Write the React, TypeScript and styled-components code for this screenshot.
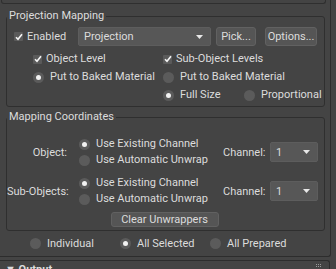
import React from 'react'
import styled, { createGlobalStyle } from 'styled-components'

const GlobalStyle = createGlobalStyle`
  html, body {
    margin: 0;
    padding: 0;
    background: #444444;
  }
  body {
    font-family: Roboto, "Liberation Sans", sans-serif;
    font-size: 11px;
    color: #dcdcdc;
  }
`

const Screen = styled.div`
  width: 336px;
  height: 269px;
  overflow: hidden;
  background: #444444;
`

const Rollout = styled.div`
  width: 330px;
  border-right: 1px solid #2d2d2d;
  border-bottom: 1px solid #2d2d2d;
  border-bottom-right-radius: 3px;
`

const PrevGroupEnd = styled.div`
  height: 3px;
  margin-left: 1px;
  width: 323px;
  border: 1px solid #2f2f2f;
  border-top: none;
  border-radius: 0 0 3px 3px;
`

const Group = styled.fieldset<{ $top: number }>`
  margin: ${p => p.$top}px 0 0 6px;
  padding: 0;
  min-width: 0;
  width: 317px;
  border: 1px solid #2f2f2f;
  border-radius: 3px;
  legend {
    margin-left: 0;
    padding: 0 2px;
    line-height: 14px;
    font-size: 11px;
  }
`

const GroupBody = styled.div<{ $pad: string }>`
  padding: ${p => p.$pad};
`

const TopRow = styled.div`
  display: flex;
  align-items: center;
  height: 19px;
  padding-left: 7px;
`

const EnabledCell = styled.div`
  width: 64px;
`

const Item = styled.label<{ $w?: number; $gap?: number }>`
  display: flex;
  align-items: center;
  gap: ${p => p.$gap ?? 4}px;
  width: ${p => (p.$w ? `${p.$w}px` : 'auto')};
  white-space: nowrap;
  line-height: 14px;
`

const Box = styled.span`
  width: 9px;
  height: 9px;
  background: #5a5a5a;
  border-radius: 1px;
  display: flex;
  align-items: center;
  justify-content: center;
  flex: none;
`

const Circle = styled.span<{ $on?: boolean }>`
  width: 11px;
  height: 11px;
  border-radius: 50%;
  background: #5b5b5b;
  display: flex;
  align-items: center;
  justify-content: center;
  flex: none;
  &::after {
    content: '';
    display: ${p => (p.$on ? 'block' : 'none')};
    width: 5px;
    height: 5px;
    border-radius: 50%;
    background: #f2f2f2;
  }
`

const Select = styled.div<{ $w: number; $h: number }>`
  width: ${p => p.$w}px;
  height: ${p => p.$h}px;
  box-sizing: border-box;
  background: #575757;
  border: 1px solid #5d5d5d;
  border-radius: 2px;
  display: flex;
  align-items: center;
  justify-content: space-between;
  padding: 0 7px 0 5px;
  flex: none;
`

const Button = styled.div<{ $w: number; $h: number }>`
  width: ${p => p.$w}px;
  height: ${p => p.$h}px;
  box-sizing: border-box;
  background: #555555;
  border: 1px solid #616161;
  border-radius: 3px;
  display: flex;
  align-items: center;
  justify-content: center;
  flex: none;
`

const OptionRow = styled.div<{ $mt: number }>`
  display: flex;
  align-items: center;
  height: 18px;
  margin-top: ${p => p.$mt}px;
  padding-left: 26px;
`

const Col = styled.div`
  width: 130px;
  flex: none;
  display: flex;
`

const Block = styled.div<{ $mt: number }>`
  display: flex;
  align-items: center;
  margin-top: ${p => p.$mt}px;
`

const BlockLabel = styled.div`
  width: 60px;
  text-align: right;
  white-space: nowrap;
  flex: none;
`

const Radios = styled.div`
  width: 144px;
  margin-left: 12px;
  display: flex;
  flex-direction: column;
  label {
    height: 16px;
  }
`

const ChannelLabel = styled.div`
  width: 47px;
  flex: none;
`

const ButtonRow = styled.div`
  display: flex;
  justify-content: center;
  margin-top: 5px;
  padding-right: 2px;
`

const BottomRow = styled.div`
  display: flex;
  align-items: center;
  height: 25px;
  padding-left: 30px;
`

const OutputHeader = styled.div`
  margin-top: 3px;
  width: 330px;
  height: 24px;
  border: 1px solid #2d2d2d;
  border-left: none;
  border-bottom: none;
  border-radius: 0 3px 0 0;
  display: flex;
  align-items: flex-start;
  justify-content: space-between;
  padding: 2px 7px 0 5px;
  box-sizing: border-box;
  font-weight: bold;
`

const Arrow = () => (
  <svg width="7" height="4" viewBox="0 0 7 4">
    <polygon points="0,0 7,0 3.5,4" fill="#e8e8e8" />
  </svg>
)

const Check = ({ label, w }: { label: string; w?: number }) => (
  <Item $w={w}>
    <Box>
      <svg width="8" height="8" viewBox="0 0 8 8">
        <path d="M1 4.2 L3 6.3 L7 1.3" stroke="#f4f4f4" strokeWidth="1.6" fill="none" />
      </svg>
    </Box>
    <span>{label}</span>
  </Item>
)

const Radio = ({ label, on, w }: { label: string; on?: boolean; w?: number }) => (
  <Item $w={w} $gap={6}>
    <Circle $on={on} />
    <span>{label}</span>
  </Item>
)

export default function App() {
  return (
    <Screen>
      <GlobalStyle />
      <Rollout>
        <PrevGroupEnd />
        <Group $top={5}>
          <legend>Projection Mapping</legend>
          <GroupBody $pad="4px 0 2px 0">
            <TopRow>
              <EnabledCell>
                <Check label="Enabled" />
              </EnabledCell>
              <Select $w={133} $h={19}>
                <span>Projection</span>
                <Arrow />
              </Select>
              <Button $w={40} $h={19} style={{ marginLeft: 5 }}>Pick...</Button>
              <Button $w={52} $h={19} style={{ marginLeft: 9 }}>Options...</Button>
            </TopRow>
            <OptionRow $mt={4}>
              <Col><Check label="Object Level" /></Col>
              <Check label="Sub-Object Levels" />
            </OptionRow>
            <OptionRow $mt={0}>
              <Col><Radio label="Put to Baked Material" on /></Col>
              <Radio label="Put to Baked Material" />
            </OptionRow>
            <OptionRow $mt={0}>
              <Col />
              <Radio label="Full Size" on w={81} />
              <Radio label="Proportional" />
            </OptionRow>
          </GroupBody>
        </Group>
        <Group $top={3}>
          <legend>Mapping Coordinates</legend>
          <GroupBody $pad="12px 0 3px 0">
            <Block $mt={0}>
              <BlockLabel>Object:</BlockLabel>
              <Radios>
                <Radio label="Use Existing Channel" on />
                <Radio label="Use Automatic Unwrap" />
              </Radios>
              <ChannelLabel>Channel:</ChannelLabel>
              <Select $w={48} $h={20}>
                <span>1</span>
                <Arrow />
              </Select>
            </Block>
            <Block $mt={7}>
              <BlockLabel>Sub-Objects:</BlockLabel>
              <Radios>
                <Radio label="Use Existing Channel" on />
                <Radio label="Use Automatic Unwrap" />
              </Radios>
              <ChannelLabel>Channel:</ChannelLabel>
              <Select $w={48} $h={20}>
                <span>1</span>
                <Arrow />
              </Select>
            </Block>
            <ButtonRow>
              <Button $w={108} $h={15}>Clear Unwrappers</Button>
            </ButtonRow>
          </GroupBody>
        </Group>
        <BottomRow>
          <Radio label="Individual" w={90} />
          <Radio label="All Selected" on w={90} />
          <Radio label="All Prepared" />
        </BottomRow>
      </Rollout>
      <OutputHeader>
        <span>▼ Output</span>
        <svg width="6" height="4" viewBox="0 0 6 4" style={{ marginTop: 1 }}>
          <rect x="0" y="0" width="1" height="1" fill="#9a9a9a" />
          <rect x="2" y="0" width="1" height="1" fill="#9a9a9a" />
          <rect x="4" y="0" width="1" height="1" fill="#9a9a9a" />
          <rect x="0" y="2" width="1" height="1" fill="#9a9a9a" />
          <rect x="2" y="2" width="1" height="1" fill="#9a9a9a" />
          <rect x="4" y="2" width="1" height="1" fill="#9a9a9a" />
        </svg>
      </OutputHeader>
    </Screen>
  )
}
